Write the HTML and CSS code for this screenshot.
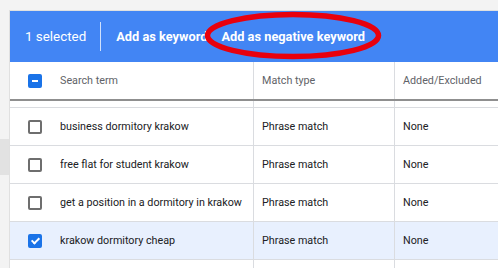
FILE: index.html
```html
<!DOCTYPE html>
<html lang="en">
<head>
  <meta charset="UTF-8" />
  <title>Search terms</title>
  <link rel="stylesheet" href="styles.css">
</head>
<body>
  <div class="layout">
    <div class="rail">
      <div class="rail-mark"></div>
    </div>

    <div class="main">
      <div class="action-bar">
        <span class="count">1 selected</span>
        <span class="bar-divider"></span>
        <span class="action">Add as keyword</span>
        <span class="action">Add as negative keyword</span>
        <!-- red marker drawn over the button -->
        <svg class="marker" width="180" height="50" viewBox="0 0 180 50">
          <ellipse cx="90" cy="24.5" rx="85.5" ry="21" fill="none" stroke="#e8000d" stroke-width="5.5" />
        </svg>
      </div>

      <div class="row head">
        <div class="cell check"><span class="box partial"></span></div>
        <div class="cell">Search term</div>
        <div class="cell line">Match type</div>
        <div class="cell line">Added/Excluded</div>
      </div>
      <div class="row spacer">
        <div class="cell"></div>
        <div class="cell"></div>
        <div class="cell line"></div>
        <div class="cell line"></div>
      </div>

      <div class="row">
        <div class="cell check"><span class="box"></span></div>
        <div class="cell">business dormitory krakow</div>
        <div class="cell line">Phrase match</div>
        <div class="cell line">None</div>
      </div>
      <div class="row">
        <div class="cell check"><span class="box"></span></div>
        <div class="cell">free flat for student krakow</div>
        <div class="cell line">Phrase match</div>
        <div class="cell line">None</div>
      </div>
      <div class="row">
        <div class="cell check"><span class="box"></span></div>
        <div class="cell">get a position in a dormitory in krakow</div>
        <div class="cell line">Phrase match</div>
        <div class="cell line">None</div>
      </div>
      <div class="row selected">
        <div class="cell check"><span class="box checked"></span></div>
        <div class="cell">krakow dormitory cheap</div>
        <div class="cell line">Phrase match</div>
        <div class="cell line">None</div>
      </div>
      <div class="row">
        <div class="cell check"><span class="box"></span></div>
        <div class="cell"></div>
        <div class="cell line"></div>
        <div class="cell line"></div>
      </div>
    </div>
  </div>
</body>
</html>
```

FILE: styles.css
```css
body {
  margin: 0;
  background: #f3f3f3;
  font-family: Roboto, "Liberation Sans", Arial, sans-serif;
  overflow: hidden;
}
.layout {
  display: flex;
  padding-top: 10px;
}
.rail {
  width: 10px;
  flex-shrink: 0;
}
.rail-mark {
  margin-top: 129px;
  height: 36px;
  background: #e2e2e2;
}
.main {
  flex: 1;
  background: #fff;
  border-top: 1px solid #e0e0e0;
  border-left: 1px solid #e0e0e0;
  margin-left: -1px;
}
.action-bar {
  position: relative;
  height: 51px;
  background: #4285f4;
  display: flex;
  align-items: center;
  padding-left: 15px;
  color: #fff;
}
.count {
  font-size: 13.4px;
}
.bar-divider {
  width: 1px;
  height: 29px;
  background: rgba(255, 255, 255, 0.75);
  margin: 0 15px 0 14px;
}
.action {
  font-size: 12.8px;
  font-weight: bold;
  margin-right: 14px;
}
.marker {
  position: absolute;
  left: 193px;
  top: 0;
}
.row {
  display: grid;
  grid-template-columns: 50px 193px 141px 1fr;
  height: 37px;
  border-bottom: 1px solid #dadce0;
  font-size: 10.75px;
  color: #202124;
}
.row.head {
  height: 37px;
  border-bottom: 2px solid #8f8f8f;
  color: #5f6368;
}
.row.spacer {
  height: 6px;
}
.row.selected {
  background: #e8f0fe;
}
.cell {
  display: flex;
  align-items: center;
  white-space: nowrap;
  overflow: hidden;
}
.cell.line {
  border-left: 1px solid #dadce0;
  padding-left: 8px;
}
.cell.check {
  padding-left: 18px;
}
.box {
  width: 10px;
  height: 10px;
  border: 2px solid #6e6e6e;
  border-radius: 2px;
  position: relative;
}
.box.partial,
.box.checked {
  background: #1a73e8;
  border-color: #1a73e8;
}
.box.partial::after {
  content: "";
  position: absolute;
  left: 2px;
  top: 4px;
  width: 6px;
  height: 2px;
  background: #fff;
}
.box.checked::after {
  content: "";
  position: absolute;
  left: 3px;
  top: 0;
  width: 3px;
  height: 6px;
  border-right: 2px solid #fff;
  border-bottom: 2px solid #fff;
  transform: rotate(45deg);
}
```
